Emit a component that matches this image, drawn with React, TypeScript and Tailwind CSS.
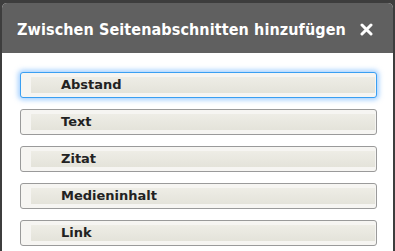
import React from "react";

const items = ["Abstand", "Text", "Zitat", "Medieninhalt", "Link"];

export default function App() {
  return (
    <div className="w-[395px] h-[251px] overflow-hidden bg-[#3d3d3d] px-[2px] pt-[3px]" style={{ fontFamily: '"DejaVu Sans", "Noto Sans", sans-serif' }}>
      <div className="h-full rounded-t-[5px] overflow-hidden bg-white flex flex-col">
        {/* Header */}
        <div className="h-[50px] bg-[#606060] flex items-center justify-between pl-[15px] pr-[20px] shrink-0">
          <h1
            className="text-white font-bold text-[16px] tracking-[0.1px] whitespace-nowrap pt-[3px]"
            style={{ fontFamily: '"DejaVu Sans Condensed", "DejaVu Sans", sans-serif' }}
          >
            Zwischen Seitenabschnitten hinzufügen
          </h1>
          <svg width="13" height="13" viewBox="0 0 13 13" className="mt-[2px]">
            <path d="M2 2 L11 11 M11 2 L2 11" stroke="white" strokeWidth="3" strokeLinecap="round" />
          </svg>
        </div>

        {/* Body */}
        <div className="flex flex-col gap-[11px] pt-[19px] pl-[18px] pr-[16px]">
          {items.map((label, i) => (
            <button
              key={label}
              className={`h-[26px] w-full rounded-[3px] border bg-[#f6f5f2] flex items-center pl-[10px] pr-[1px] ${
                i === 0
                  ? "border-[#3a9ff2] shadow-[0_0_5px_2px_rgba(90,170,255,0.55)]"
                  : "border-[#9a9a9a]"
              }`}
            >
              <div className="h-[16px] w-full bg-gradient-to-b from-[#eeede6] to-[#e4e3da] flex items-center pl-[30px]">
                <span className="text-[13px] font-bold text-[#222]">{label}</span>
              </div>
            </button>
          ))}
        </div>
      </div>
    </div>
  );
}
